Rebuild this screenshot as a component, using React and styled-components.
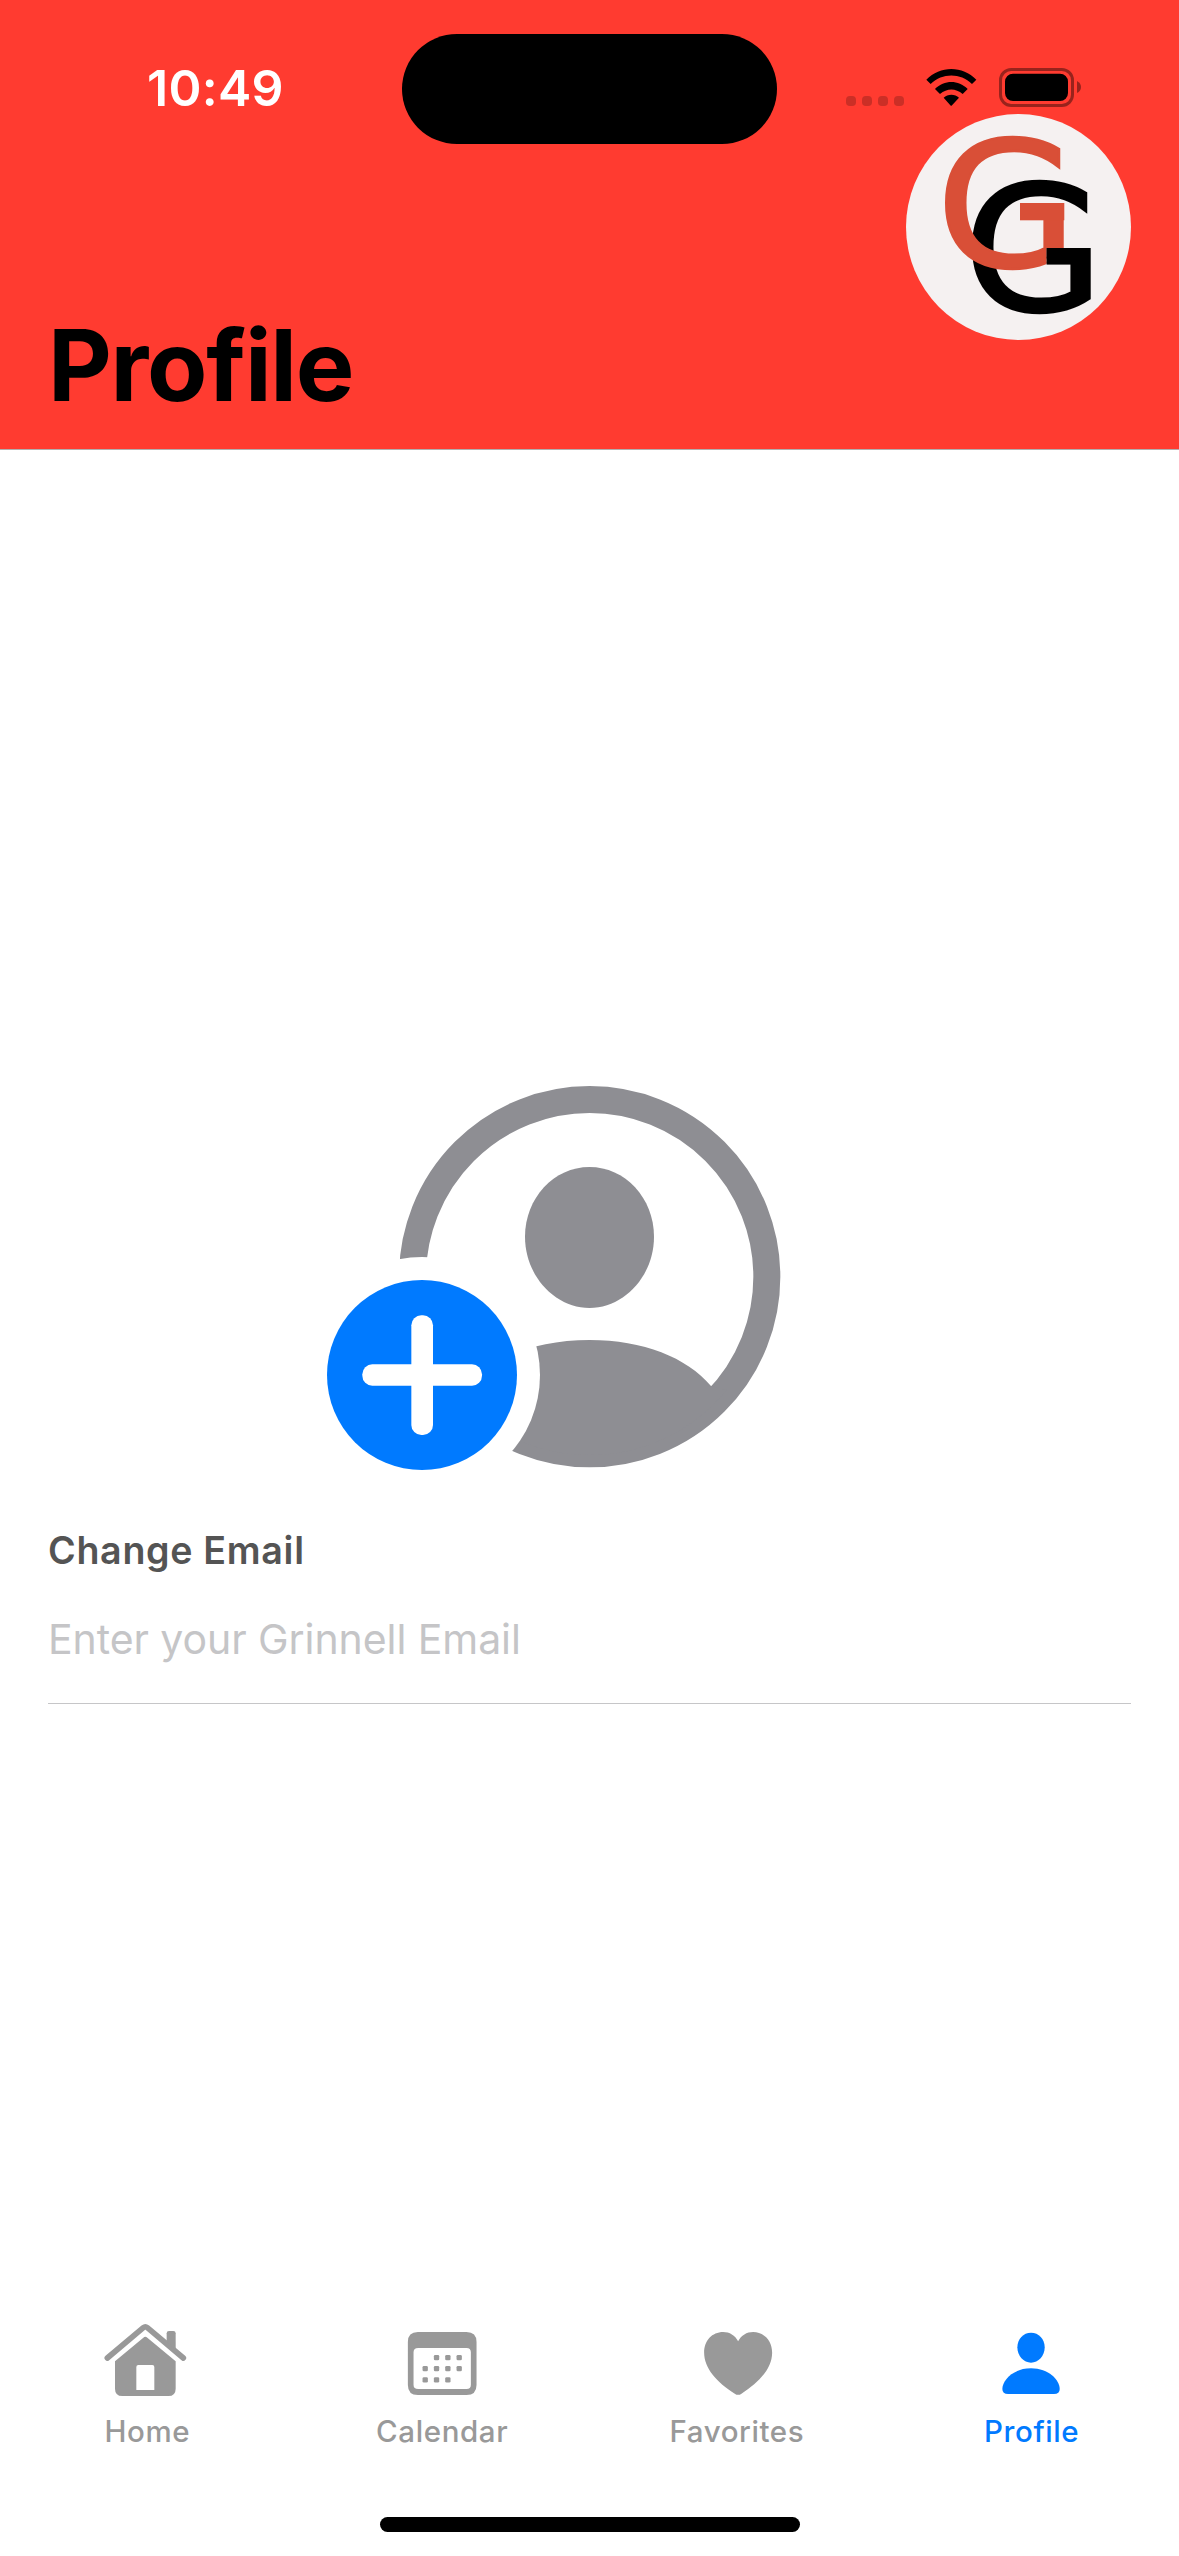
import React from "react";
import styled, { createGlobalStyle } from "styled-components";

const GlobalStyle = createGlobalStyle`
  * { box-sizing: border-box; }
  body { margin: 0; background: #fff; font-family: Inter, "Liberation Sans", sans-serif; }
  svg { display: block; flex: none; }
`;

const Screen = styled.div`
  width: 1179px;
  height: 2556px;
  display: flex;
  flex-direction: column;
  background: #fff;
  overflow: hidden;
`;

const Header = styled.header`
  height: 450px;
  padding: 0 48px;
  display: grid;
  grid-template-columns: 1fr 375px 1fr;
  background: #ff3b30;
  border-bottom: 1px solid #b2aeae;
`;

const HeaderStart = styled.div`
  display: flex;
  flex-direction: column;
  justify-content: space-between;
  padding: 58px 0 24px;
`;

const HeaderEnd = styled.div`
  display: flex;
  flex-direction: column;
  align-items: flex-end;
`;

const Time = styled.time`
  padding-left: 99px;
  font-size: 50px;
  line-height: 60px;
  font-weight: 600;
  letter-spacing: 0.3px;
  color: #fff;
`;

const Title = styled.h1`
  margin: 0;
  font-size: 98.6px;
  line-height: 120px;
  font-weight: 700;
  letter-spacing: -1.3px;
  color: #000;
  white-space: nowrap;
`;

const Island = styled.div`
  height: 110.5px;
  margin-top: 33.7px;
  border-radius: 56px;
  background: #000;
`;

const StatusIcons = styled.div`
  height: 114px;
  padding: 0 50px 7px 0;
  display: flex;
  align-items: flex-end;
  gap: 22px;
`;

const Logo = styled.div`
  width: 225px;
  height: 226px;
  border-radius: 50%;
  background: #f5f1f1;
`;

const Main = styled.main`
  flex: 1;
  display: flex;
  flex-direction: column;
  padding: 620px 48px 0;
`;

const PhotoButton = styled.button`
  align-self: center;
  padding: 0;
  border: 0;
  background: none;
`;

const Field = styled.label`
  display: flex;
  flex-direction: column;
  gap: 33px;
  margin-top: 36px;
`;

const FieldLabel = styled.span`
  font-size: 37.6px;
  line-height: 50px;
  font-weight: 600;
  letter-spacing: 0.7px;
  color: #545454;
`;

const FieldInput = styled.input`
  width: 100%;
  height: 95px;
  padding: 0 0 34px;
  border: 0;
  border-bottom: 1px solid #c6c6c8;
  background: none;
  font: 400 41px/60px Inter, "Liberation Sans", sans-serif;
  letter-spacing: -0.07px;
  &::placeholder { color: #c5c5c7; opacity: 1; }
`;

const TabBar = styled.nav`
  display: grid;
  grid-template-columns: repeat(4, 1fr);
  margin-bottom: 68px;
`;

const Tab = styled.a`
  display: flex;
  flex-direction: column;
  align-items: center;
  gap: 11px;
  color: ${(p) => (p.$active ? "#007aff" : "#999999")};
`;

const TabLabel = styled.span`
  font-size: 29.5px;
  line-height: 36px;
  font-weight: 500;
  letter-spacing: 0.6px;
`;

const HomeIndicator = styled.div`
  width: 420px;
  height: 15px;
  margin: 0 auto 24px;
  border-radius: 8px;
  background: #000;
`;

const SignalDots = () => (
  <svg width="58" height="11" viewBox="0 0 58 11" fill="#000" opacity="0.2">
    {[0, 16, 32, 48].map((x) => (
      <rect key={x} x={x} y="0" width="10" height="10" rx="3.8" />
    ))}
  </svg>
);

const Wifi = () => (
  <svg width="51" height="39" viewBox="319 84 153 117">
    <path d="M320 119C361 76 429 76 470 119L457 132C422 98 368 98 333 132Z" />
    <path d="M346 147C374 119 416 119 444 147L429 162C408 144 382 144 361 162Z" />
    <path d="M372 173C384 161 406 161 418 173L397 196Q395 199 392 196Z" />
  </svg>
);

const Battery = () => (
  <svg width="82" height="39" viewBox="537 84 246 117">
    <g opacity="0.4">
      <rect x="541.5" y="88.5" width="216" height="108" rx="32" fill="none" stroke="#000" strokeWidth="9" />
      <path d="M771 123Q783 129 783 141T771 159Z" />
    </g>
    <rect x="555" y="101" width="189" height="82" rx="24" />
  </svg>
);

const LogoMark = () => (
  <svg width="225" height="226" viewBox="0 0 225 226" fontFamily="'DejaVu Sans', sans-serif" fontSize="175.500" strokeWidth="2.4">
    <clipPath id="redArea">
      <path clipRule="evenodd" d="M0 0H225V226H0ZM98 76H165V89H114V110H98ZM140.600 134H185V151H140.600Z" />
    </clipPath>
    <clipPath id="blackArea">
      <path clipRule="evenodd" d="M0 0H225V226H0ZM125 121H191V134H140.600V156H125Z" />
    </clipPath>
    <g clipPath="url(#blackArea)">
      <text transform="translate(57 196.8) scale(1.04 1)" fill="#000" stroke="#000">G</text>
    </g>
    <g clipPath="url(#redArea)">
      <text transform="translate(30 152.6) scale(1.04 1)" fill="#d94f37" stroke="#d94f37">G</text>
    </g>
    <rect x="114" y="89" width="44.3" height="17.3" fill="#d94f37" />
    <rect x="140.6" y="134" width="43.4" height="16.6" fill="#000" />
  </svg>
);

const AddPhoto = () => (
  <svg width="560" height="420" viewBox="0 0 1680 1260">
    <mask id="badgeCut" maskUnits="userSpaceOnUse" x="-1" y="0" width="1682" height="1260">
      <rect x="-1" width="1682" height="1260" fill="#fff" />
      <circle cx="336" cy="915" r="354" fill="#000" />
    </mask>
    <g fill="#8e8e93" mask="url(#badgeCut)">
      <circle cx="839" cy="620" r="531.5" fill="none" stroke="#8e8e93" strokeWidth="81" />
      <path d="M645 500C645 384 732 291 838.500 291S1032 384 1032 500C1032 618 942 714 838.500 714S645 618 645 500Z" />
      <path d="M475 948C548 862 678 810 839 810S1130 862 1203 948L1250 960A530 530 0 0 1 428 960Z" />
    </g>
    <circle cx="336" cy="915" r="285" fill="#007aff" />
    <rect x="157" y="883" width="359" height="64" rx="30" fill="#fff" />
    <rect x="304" y="736" width="65" height="359" rx="30" fill="#fff" />
  </svg>
);

const TabIcon = ({ x, children }) => (
  <svg width="96" height="84" viewBox={`${x} 54 288 252`} fill="currentColor">
    {children}
  </svg>
);

const HomeIcon = () => (
  <TabIcon x={58}>
    <path d="M83 174L191 83Q197 78 203 83L311 174" fill="none" stroke="currentColor" strokeWidth="17" strokeLinecap="round" strokeLinejoin="round" />
    <path d="M261 125V100Q261 93 268 93H281Q288 93 288 100V150Z" />
    <path fillRule="evenodd" d="M106 184L191 113Q197 108 203 113L288 184V266Q288 288 266 288H128Q106 288 106 266ZM170 270H224V201Q224 195 218 195H176Q170 195 170 201Z" />
  </TabIcon>
);

const CALENDAR_DAYS = [
  [230, 173], [264, 173], [298, 173],
  [196, 206], [230, 206], [264, 206], [298, 206],
  [196, 239.5], [230, 239.5], [264, 239.5],
];

const CalendarIcon = () => (
  <TabIcon x={102.4}>
    <path fillRule="evenodd" d="M174 96H320Q350 96 350 126V255Q350 285 320 285H174Q144 285 144 255V126Q144 96 174 96ZM175 144Q161 144 161 157V254Q161 267 175 267H320Q333 267 333 254V157Q333 144 320 144Z" />
    {CALENDAR_DAYS.map(([cx, cy]) => (
      <rect key={`${cx}-${cy}`} x={cx - 8} y={cy - 8} width="16" height="16" rx="4" />
    ))}
  </TabIcon>
);

const HeartIcon = () => (
  <TabIcon x={146.6}>
    <path d="M294 124C285 106 268 96 249 96C216 96 192 122 192 158C192 204 230 247 284 281Q294 288 304 281C358 247 396 204 396 158C396 122 372 96 339 96C320 96 303 106 294 124Z" />
  </TabIcon>
);

const PersonIcon = () => (
  <TabIcon x={130.9}>
    <path d="M231 142C231 117 249 98 272 98S313 117 313 142C313 168 294 188 272 188S231 168 231 142Z" />
    <path d="M186 267C186 240 219 205 272 205S358 240 358 267Q358 282 341 282H203Q186 282 186 267Z" />
  </TabIcon>
);

const TABS = [
  { label: "Home", Icon: HomeIcon },
  { label: "Calendar", Icon: CalendarIcon },
  { label: "Favorites", Icon: HeartIcon },
  { label: "Profile", Icon: PersonIcon, active: true },
];

export default function App() {
  return (
    <Screen>
      <GlobalStyle />
      <Header>
        <HeaderStart>
          <Time>10:49</Time>
          <Title>Profile</Title>
        </HeaderStart>
        <Island />
        <HeaderEnd>
          <StatusIcons>
            <SignalDots />
            <Wifi />
            <Battery />
          </StatusIcons>
          <Logo>
            <LogoMark />
          </Logo>
        </HeaderEnd>
      </Header>
      <Main>
        <PhotoButton aria-label="Add photo">
          <AddPhoto />
        </PhotoButton>
        <Field>
          <FieldLabel>Change Email</FieldLabel>
          <FieldInput type="email" placeholder="Enter your Grinnell Email" />
        </Field>
      </Main>
      <TabBar>
        {TABS.map(({ label, Icon, active }) => (
          <Tab key={label} $active={active}>
            <Icon />
            <TabLabel>{label}</TabLabel>
          </Tab>
        ))}
      </TabBar>
      <HomeIndicator />
    </Screen>
  );
}
